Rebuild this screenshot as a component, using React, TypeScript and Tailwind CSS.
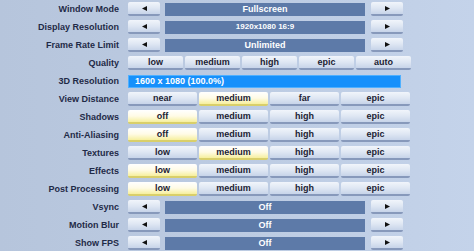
import React from "react";

const font = { fontFamily: '"Liberation Sans", Arial, sans-serif' };

function Label({ text }: { text: string }) {
  return (
    <div className="w-[119px] shrink-0 text-right text-[9px] font-bold leading-[14px] text-[#1f2a47]">
      {text}
    </div>
  );
}

function Btn({
  children,
  selected,
  className = "",
}: {
  children?: React.ReactNode;
  selected?: boolean;
  className?: string;
}) {
  return (
    <div
      className={
        "flex h-[14px] items-center justify-center rounded-[2px] border-b-2 text-[9px] font-bold leading-none text-[#1c2233] " +
        (selected
          ? "bg-gradient-to-b from-[#ffffff] via-[#fffbe6] to-[#f6ef9c] border-[#d9cf6a] "
          : "bg-gradient-to-b from-[#f1f5fb] via-[#dfe7f3] to-[#c7d4e9] border-[#8799bb] ") +
        className
      }
    >
      {children}
    </div>
  );
}

function Arrow({ dir }: { dir: "left" | "right" }) {
  return (
    <svg width="5" height="5" viewBox="0 0 5 5">
      {dir === "left" ? (
        <polygon points="5,0 5,5 0,2.5" fill="#111" />
      ) : (
        <polygon points="0,0 0,5 5,2.5" fill="#111" />
      )}
    </svg>
  );
}

function ArrowRow({ label, value, small }: { label: string; value: string; small?: boolean }) {
  return (
    <div className="flex h-[14px] items-center gap-[9px]">
      <Label text={label} />
      <Btn className="w-[32px]">
        <Arrow dir="left" />
      </Btn>
      <div
        className={
          "ml-[-4px] flex h-[13px] w-[200px] items-center justify-center bg-[#5d7aa8] font-bold leading-none text-white " +
          (small ? "text-[8px]" : "text-[9px]")
        }
      >
        {value}
      </div>
      <Btn className="ml-[-3px] w-[32px]">
        <Arrow dir="right" />
      </Btn>
    </div>
  );
}

function ChoiceRow({
  label,
  options,
  selected,
  width,
}: {
  label: string;
  options: string[];
  selected?: number;
  width: string;
}) {
  return (
    <div className="flex h-[14px] items-center gap-[9px]">
      <Label text={label} />
      <div className="flex gap-[2px]">
        {options.map((o, i) => (
          <Btn key={o} selected={i === selected} className={width}>
            {o}
          </Btn>
        ))}
      </div>
    </div>
  );
}

export default function App() {
  const four = (a: string) => [a, "medium", "high", "epic"];
  return (
    <div
      className="h-[251px] w-[474px] overflow-hidden bg-gradient-to-r from-[#b6c5dc] via-[#bccbe2] to-[#c4d3ea] pt-[2px]"
      style={font}
    >
      <div className="flex flex-col gap-[4px]">
        <ArrowRow label="Window Mode" value="Fullscreen" />
        <ArrowRow label="Display Resolution" value="1920x1080 16:9" small />
        <ArrowRow label="Frame Rate Limit" value="Unlimited" />
        <ChoiceRow
          label="Quality"
          options={["low", "medium", "high", "epic", "auto"]}
          width="w-[55px]"
        />
        <div className="flex h-[14px] items-center gap-[9px]">
          <Label text="3D Resolution" />
          <div className="flex h-[13px] w-[273px] items-center border border-[#4fb0ff] bg-[#1690fb] pl-[6px] text-[9px] font-bold leading-none text-white">
            1600 x 1080 (100.0%)
          </div>
        </div>
        <ChoiceRow label="View Distance" options={["near", "medium", "far", "epic"]} selected={1} width="w-[69px]" />
        <ChoiceRow label="Shadows" options={four("off")} selected={0} width="w-[69px]" />
        <ChoiceRow label="Anti-Aliasing" options={four("off")} selected={0} width="w-[69px]" />
        <ChoiceRow label="Textures" options={four("low")} selected={1} width="w-[69px]" />
        <ChoiceRow label="Effects" options={four("low")} selected={0} width="w-[69px]" />
        <ChoiceRow label="Post Processing" options={four("low")} selected={0} width="w-[69px]" />
        <ArrowRow label="Vsync" value="Off" />
        <ArrowRow label="Motion Blur" value="Off" />
        <ArrowRow label="Show FPS" value="Off" />
      </div>
    </div>
  );
}
